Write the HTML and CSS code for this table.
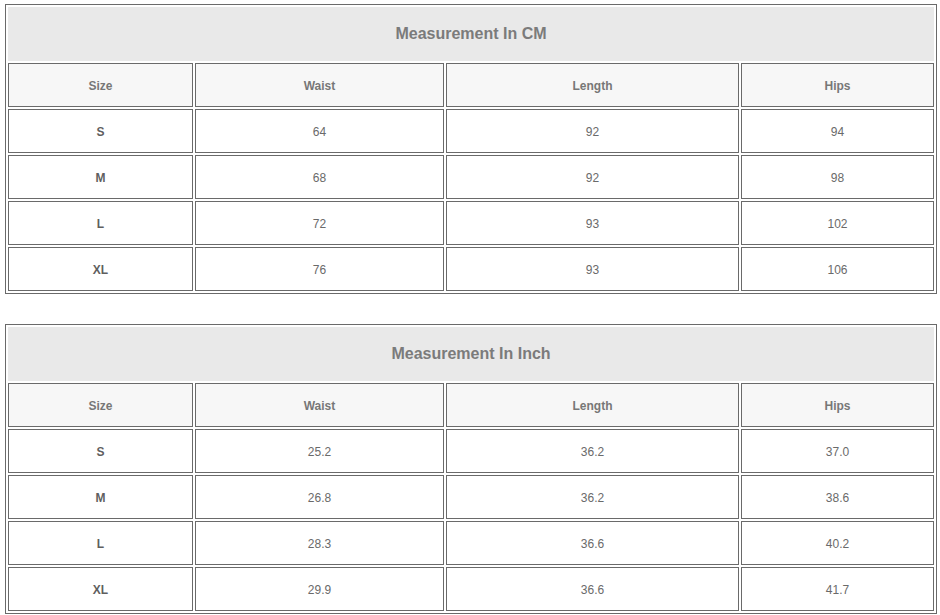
FILE: index.html
```html
<!DOCTYPE html>
<html>
<head>
<meta charset="utf-8">
<link rel="stylesheet" href="styles.css">
</head>
<body>
<table class="size-table">
  <colgroup>
    <col class="c-size"><col class="c-waist"><col class="c-length"><col class="c-hips">
  </colgroup>
  <tr><td class="title" colspan="4">Measurement In CM</td></tr>
  <tr class="head"><td>Size</td><td>Waist</td><td>Length</td><td>Hips</td></tr>
  <tr><td class="sz">S</td><td>64</td><td>92</td><td>94</td></tr>
  <tr><td class="sz">M</td><td>68</td><td>92</td><td>98</td></tr>
  <tr><td class="sz">L</td><td>72</td><td>93</td><td>102</td></tr>
  <tr><td class="sz">XL</td><td>76</td><td>93</td><td>106</td></tr>
</table>
<table class="size-table second">
  <colgroup>
    <col class="c-size"><col class="c-waist"><col class="c-length"><col class="c-hips">
  </colgroup>
  <tr><td class="title" colspan="4">Measurement In Inch</td></tr>
  <tr class="head"><td>Size</td><td>Waist</td><td>Length</td><td>Hips</td></tr>
  <tr><td class="sz">S</td><td>25.2</td><td>36.2</td><td>37.0</td></tr>
  <tr><td class="sz">M</td><td>26.8</td><td>36.2</td><td>38.6</td></tr>
  <tr><td class="sz">L</td><td>28.3</td><td>36.6</td><td>40.2</td></tr>
  <tr><td class="sz">XL</td><td>29.9</td><td>36.6</td><td>41.7</td></tr>
</table>
</body>
</html>
```
FILE: styles.css
```css
html, body {
  margin: 0;
  padding: 0;
  background: #ffffff;
}
body {
  font-family: "Liberation Sans", Arial, sans-serif;
  color: #666666;
}
.size-table {
  table-layout: fixed;
  width: 932px;
  border-collapse: separate;
  border-spacing: 2px;
  border: 1px solid #6a6a6a;
  margin: 4px 0 0 5px;
}
.size-table.second {
  margin-top: 30px;
}
.c-size { width: 185px; }
.c-waist { width: 249px; }
.c-length { width: 293px; }
.c-hips { width: 193px; }
.size-table td {
  box-sizing: border-box;
  height: 44px;
  padding: 2px 0 0 0;
  border: 1px solid #6a6a6a;
  text-align: center;
  vertical-align: middle;
  font-size: 12px;
  color: #6a6a6a;
  background: #ffffff;
}
.size-table td.title {
  height: 54px;
  padding: 0;
  border-color: #e9e9e9;
  background: #e9e9e9;
  font-size: 16px;
  font-weight: bold;
  color: #7b7b7b;
}
.size-table .head td {
  background: #f7f7f7;
  font-weight: bold;
  color: #777777;
}
.size-table td.sz {
  font-weight: bold;
  color: #5f5f5f;
}
```
